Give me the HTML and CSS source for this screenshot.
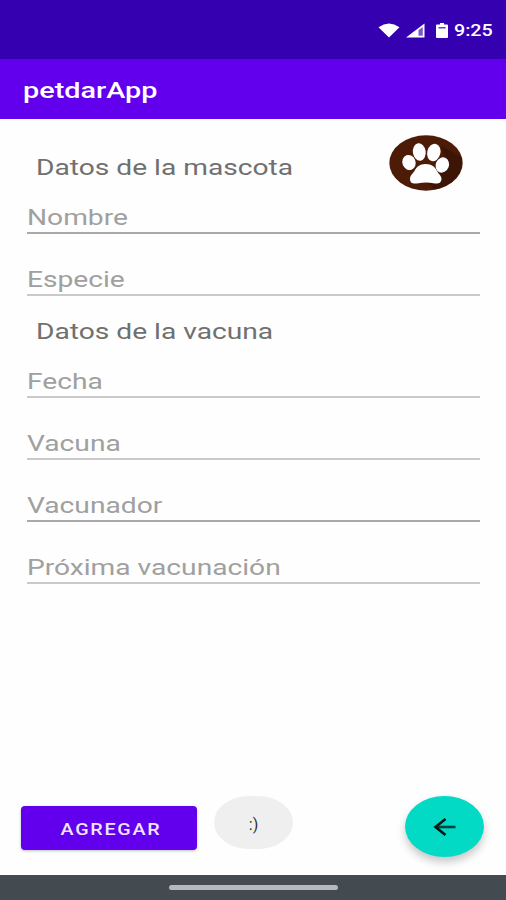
FILE: index.html
```html
<!DOCTYPE html>
<html lang="es">
<head>
    <meta charset="UTF-8">
    <meta name="viewport" content="width=device-width, initial-scale=1.0">
    <title>petdarApp</title>
    <link rel="stylesheet" href="styles.css">
</head>
<body>

    <div class="status-bar">
        <svg class="wifi" width="22" height="15" viewBox="0 0 22 15">
            <path d="M0.5 4.2 Q11 -3 21.5 4.2 L11 14.5 Z" fill="#fff"/>
        </svg>
        <svg class="signal" width="19" height="15" viewBox="0 0 19 15">
            <path d="M0 14.5 L18.5 0.5 V14.5 Z" fill="#fff"/>
            <path d="M12.5 7 L16.8 4 V12.8 H12.5 Z" fill="#3400b0" opacity="0.65"/>
        </svg>
        <svg class="battery" width="12" height="15" viewBox="0 0 12 15">
            <path d="M4 0 H8 V1.5 H11 Q12 1.5 12 2.5 V14 Q12 15 11 15 H1 Q0 15 0 14 V2.5 Q0 1.5 1 1.5 H4 Z" fill="#fff"/>
            <path d="M2.5 4 H9.5 V5.5 H2.5 Z" fill="#3400b0" opacity="0.75"/>
        </svg>
        <span class="clock"><span class="wide">9:25</span></span>
    </div>

    <header class="app-bar">
        <span class="wide">petdarApp</span>
    </header>

    <main class="form">
        <div class="section-title first">
            <span class="wide">Datos de la mascota</span>
            <svg class="paw" width="74" height="56" viewBox="0 0 74 56">
                <ellipse cx="37" cy="28" rx="36.7" ry="27.7" fill="#4d1c06"/>
                <path d="M52 10 L72 22 A36.7 27.7 0 0 1 46 54.5 L38 48 L58 30 Z" fill="#3d1506"/>
                <g fill="#fff">
                    <ellipse cx="20" cy="27.5" rx="6.6" ry="7.6" transform="rotate(-20 20 27.5)"/>
                    <ellipse cx="30.3" cy="17" rx="6.4" ry="8.8" transform="rotate(-8 30.3 17)"/>
                    <ellipse cx="44.8" cy="17.5" rx="6.6" ry="8.8" transform="rotate(14 44.8 17.5)"/>
                    <ellipse cx="53.3" cy="30" rx="6.6" ry="7.8" transform="rotate(22 53.3 30)"/>
                    <path d="M36.5 29 C43 29 46 32 48 36 C49.5 39 52.5 40.5 52.5 44 C52 49 48 49 44.5 48.2 C40 47.2 34 47.2 29.5 48.2 C25 49 21.200 49 21 44 C21 40.500 23.500 39 25.500 36 C27.500 32 30.500 29 36.500 29 Z"/>
                </g>
            </svg>
        </div>
        <div class="field"><span class="wide">Nombre</span></div>
        <div class="field soft"><span class="wide">Especie</span></div>

        <div class="section-title">
            <span class="wide">Datos de la vacuna</span>
        </div>
        <div class="field soft"><span class="wide">Fecha</span></div>
        <div class="field soft"><span class="wide">Vacuna</span></div>
        <div class="field"><span class="wide">Vacunador</span></div>
        <div class="field soft"><span class="wide">Próxima vacunación</span></div>
    </main>

    <div class="actions">
        <button class="btn-add"><span class="wide">AGREGAR</span></button>
        <div class="toast"><span class="wide">:)</span></div>
        <button class="fab">
            <svg width="24" height="18" viewBox="0 0 24 18">
                <path d="M3 9 H22.500" fill="none" stroke="#06463f" stroke-width="2.600"/>
                <path d="M12.500 1 L2.500 9 L12.500 17" fill="none" stroke="#031613" stroke-width="2.600"/>
            </svg>
        </button>
    </div>

    <footer class="nav-bar"><div class="handle"></div></footer>

</body>
</html>
```

FILE: styles.css
```css
* {
    box-sizing: border-box;
}
body {
    margin: 0;
    height: 900px;
    display: flex;
    flex-direction: column;
    overflow: hidden;
    background-color: #fefefe;
    font-family: Roboto, sans-serif;
}
/* the whole UI uses horizontally stretched type */
.wide {
    display: inline-block;
    white-space: nowrap;
    transform: scaleX(1.28);
    transform-origin: left center;
}

.status-bar {
    height: 59px;
    flex: none;
    display: flex;
    align-items: center;
    padding: 2px 0 0 378px;
    background-color: #3400b0;
    color: #fff;
}
.signal { margin-left: 6px; }
.battery { margin-left: 11px; }
.clock {
    margin-left: 6px;
    font-size: 16px;
    font-weight: 500;
}
.clock .wide {
    transform: scaleX(1.23);
}

.app-bar {
    height: 60px;
    flex: none;
    display: flex;
    align-items: center;
    padding: 3px 0 0 23px;
    background-color: #6200ee;
    color: #fff;
    font-size: 22px;
    font-weight: 500;
}
.app-bar .wide {
    transform: scaleX(1.31);
}

.form {
    flex: 1;
    padding: 0 26px 0 27px;
}
.section-title {
    height: 56px;
    display: flex;
    align-items: center;
    justify-content: space-between;
    padding: 15px 17px 0 9px;
    color: #707070;
    font-size: 22px;
}
.section-title.first {
    height: 69px;
    padding-top: 28px;
}
.paw {
    margin-top: -9px;
}
.field {
    height: 46px;
    padding-top: 17px;
    border-bottom: 2px solid #a9a9a9;
    color: #a0a0a0;
    font-size: 22px;
    line-height: 26px;
}
.field.soft {
    border-bottom-color: #c9c9c9;
}
.field + .field {
    margin-top: 16px;
}

.actions {
    height: 79px;
    flex: none;
    display: flex;
    align-items: flex-start;
    padding: 0 22px 0 21px;
}
button {
    border: 0;
    padding: 0;
    font-family: inherit;
}
.btn-add {
    width: 176px;
    height: 44px;
    margin-top: 10px;
    padding: 2px 0 0 3px;
    border-radius: 4px;
    background-color: #6200ee;
    color: #f0e4ff;
    font-size: 16px;
    font-weight: 500;
    letter-spacing: 1.4px;
    box-shadow: 0 1px 3px rgba(0, 0, 0, 0.25);
}
.btn-add .wide {
    transform: scaleX(1.23);
    transform-origin: center;
}
.toast {
    width: 79px;
    height: 53px;
    margin-left: 17px;
    padding-top: 3px;
    display: flex;
    align-items: center;
    justify-content: center;
    border-radius: 35px / 26.5px;
    background-color: #efefef;
    color: #333;
    font-size: 16px;
}
.toast .wide {
    transform: none;
}
.fab {
    width: 79px;
    height: 61px;
    margin-left: auto;
    display: flex;
    align-items: center;
    justify-content: center;
    border-radius: 50%;
    background-color: #03dac5;
    box-shadow: 0 5px 9px rgba(0, 0, 0, 0.22);
}

.nav-bar {
    height: 25px;
    flex: none;
    display: flex;
    justify-content: center;
    padding-top: 10px;
    background-color: #434b50;
}
.handle {
    width: 169px;
    height: 5px;
    border-radius: 2.5px;
    background-color: #b3b9bc;
}
```
